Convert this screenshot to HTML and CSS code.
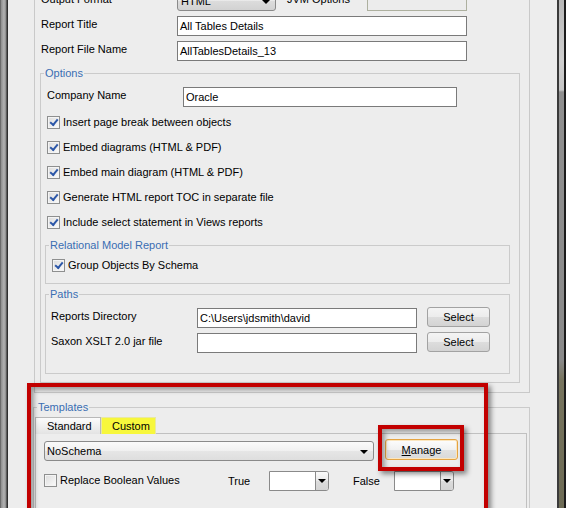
FILE: index.html
```html
<!DOCTYPE html>
<html lang="en">
<head>
    <meta charset="UTF-8">
    <title>Report Options</title>
    <link rel="stylesheet" href="styles.css">
</head>
<body>
<div class="window">
    <div class="edge-left"></div>

    <div class="dialog">
        <div class="general">
            <div class="row">
                <label class="lbl">Output Format</label>
                <div class="combo fmt"><span>HTML</span><i class="arrow"></i></div>
                <label class="lbl-jvm">JVM Options</label>
                <div class="field off"></div>
            </div>
            <div class="row">
                <label class="lbl">Report Title</label>
                <div class="field wide">All Tables Details</div>
            </div>
            <div class="row">
                <label class="lbl">Report File Name</label>
                <div class="field wide">AllTablesDetails_13</div>
            </div>

            <fieldset class="box options">
                <legend>Options</legend>
                <div class="row company">
                    <label class="lbl">Company Name</label>
                    <div class="field">Oracle</div>
                </div>
                <div class="check"><span class="tick on"></span>Insert page break between objects</div>
                <div class="check"><span class="tick on"></span>Embed diagrams (HTML &amp; PDF)</div>
                <div class="check"><span class="tick on"></span>Embed main diagram (HTML &amp; PDF)</div>
                <div class="check"><span class="tick on"></span>Generate HTML report TOC in separate file</div>
                <div class="check"><span class="tick on"></span>Include select statement in Views reports</div>

                <fieldset class="box inner relational">
                    <legend>Relational Model Report</legend>
                    <div class="check"><span class="tick on"></span>Group Objects By Schema</div>
                </fieldset>

                <fieldset class="box inner paths">
                    <legend>Paths</legend>
                    <div class="row path">
                        <label class="lbl">Reports Directory</label>
                        <div class="field">C:\Users\jdsmith\david</div>
                        <button class="btn">Select</button>
                    </div>
                    <div class="row path">
                        <label class="lbl">Saxon XSLT 2.0 jar file</label>
                        <div class="field"></div>
                        <button class="btn">Select</button>
                    </div>
                </fieldset>
            </fieldset>
        </div>

        <fieldset class="box templates">
            <legend>Templates</legend>
            <div class="tabs">
                <span class="tab">Standard</span>
                <span class="tab custom">Custom</span>
            </div>
            <div class="tab-panel">
                <div class="row">
                    <div class="combo schema"><span>NoSchema</span><i class="arrow"></i></div>
                    <button class="btn manage"><u>M</u>anage</button>
                </div>
                <div class="row bools">
                    <div class="check"><span class="tick"></span>Replace Boolean Values</div>
                    <label class="lbl-bool">True</label>
                    <div class="pick"><span class="pick-text"></span><span class="pick-btn"><i class="arrow"></i></span></div>
                    <label class="lbl-bool false">False</label>
                    <div class="pick"><span class="pick-text"></span><span class="pick-btn"><i class="arrow"></i></span></div>
                </div>
            </div>
        </fieldset>
    </div>

    <div class="edge-right"></div>

    <!-- red highlight frames drawn over the dialog -->
    <div class="callout big"></div>
    <div class="callout small"></div>
</div>
</body>
</html>
```

FILE: styles.css
```css
body {
    margin: 0;
    font-family: "Liberation Sans", Arial, sans-serif;
    font-size: 11px;
    color: #000;
}

.window {
    position: relative;
    width: 566px;
    height: 508px;
    overflow: hidden;
    display: flex;
    background: #ededed;
}

.edge-left {
    flex: none;
    width: 8px;
    background:
        linear-gradient(to right, #4a4a4a 0, #8d8d8d 1px, #b3b3b3 4px, #8a8a8a 6px, #2f2f2f 7px, #2f2f2f 8px);
}

.edge-right {
    flex: none;
    width: 9px;
    background:
        linear-gradient(to right, #3a3a3a 0, #3a3a3a 2px, transparent 2px, transparent 7px, #1c1c1c 7px),
        linear-gradient(#b8b8b8 0, #cfcfcf 60px, #c4c4c4 90px, #8f8f8f 92px, #8a8a8a 360px, #77745e 380px, #6d6b55 508px);
}

.dialog {
    flex: none;
    width: 549px;
}

.general {
    box-sizing: border-box;
    width: 496px;
    margin: -30px 0 0 26px;
    padding: 21px 0 0 6px;
    border: 1px solid #c9c9c9;
    border-top: none;
}

.row {
    display: flex;
    align-items: flex-start;
    height: 20px;
    margin-bottom: 5px;
}

.lbl {
    flex: none;
    width: 136px;
    padding-top: 2px;
    line-height: 13px;
}

.lbl-jvm {
    flex: none;
    width: 80px;
    margin-left: 11px;
    padding-top: 2px;
    line-height: 13px;
}

.field {
    box-sizing: border-box;
    flex: none;
    height: 20px;
    padding: 0 2px;
    border: 1px solid #7a7a7a;
    background: #fff;
    line-height: 18px;
    white-space: nowrap;
}

.field.wide {
    width: 290px;
}

.field.off {
    width: 100px;
    border-color: #adb09f;
    background: #ececec;
}

.combo {
    box-sizing: border-box;
    position: relative;
    flex: none;
    height: 20px;
    padding: 0 3px;
    border: 1px solid #8a8a8a;
    border-radius: 3px;
    background: linear-gradient(#f6f6f6, #e9e9e9 50%, #dcdcdc 51%, #d2d2d2);
    line-height: 18px;
}

.combo.fmt {
    width: 99px;
}

.arrow {
    position: absolute;
    right: 5px;
    top: 8px;
    width: 0;
    height: 0;
    border-left: 4px solid transparent;
    border-right: 4px solid transparent;
    border-top: 4px solid #000;
}

/* group boxes */
.box {
    margin: 0;
    padding: 0;
    border: 1px solid #cbcbcb;
}

.box legend {
    margin-left: 3px;
    padding: 0 1px;
    line-height: 12px;
    color: #3a6db3;
}

.options {
    margin: 6px 9px 9px -1px;
    padding: 8px 0 0;
}

.company {
    margin-left: 6px;
}

.company .field {
    width: 274px;
}

.check {
    display: flex;
    align-items: center;
    height: 13px;
    margin: 12px 0 0 6px;
    line-height: 13px;
    white-space: nowrap;
}

.company + .check {
    margin-top: 9px;
}

.tick {
    box-sizing: border-box;
    position: relative;
    flex: none;
    width: 13px;
    height: 13px;
    margin-right: 3px;
    border: 1px solid #8e8f8f;
    background: linear-gradient(135deg, #dcdcdc, #fbfbfb);
    box-shadow: inset 0 0 0 1px #f4f4f4;
}

.tick.on::after {
    content: "";
    position: absolute;
    left: 2px;
    top: 2px;
    width: 6px;
    height: 3px;
    border-left: 2px solid #2c57a8;
    border-bottom: 2px solid #2c57a8;
    transform: rotate(-50deg);
}

.inner {
    margin: 10px 9px 0 4px;
}

.relational {
    padding: 8px 0 11px;
}

.relational .check {
    margin-top: 0;
}

.paths {
    margin-top: 4px;
    margin-bottom: 8px;
    padding: 8px 0 15px;
}

.path {
    margin-left: 5px;
}

.path .lbl {
    width: 146px;
}

.path .field {
    width: 220px;
}

.btn {
    box-sizing: border-box;
    flex: none;
    width: 63px;
    height: 20px;
    margin: -1px 0 0 10px;
    padding: 0;
    border: 1px solid #a2a2a2;
    border-radius: 3px;
    background: linear-gradient(#f4f4f4, #ececec 50%, #dddddd 51%, #d3d3d3);
    font: inherit;
    color: #000;
}

/* templates */
.templates {
    box-sizing: border-box;
    width: 497px;
    margin: 8px 0 0 25px;
    padding: 4px 0 0;
}

.tabs {
    display: flex;
    height: 16px;
    margin-left: 1px;
}

.tab {
    box-sizing: border-box;
    width: 66px;
    height: 17px;
    padding-left: 11px;
    border: 1px solid #b8b8b8;
    border-bottom: none;
    background: linear-gradient(#fbfbfb, #e3e3e3);
    line-height: 16px;
}

.tab.custom {
    width: 55px;
    padding-left: 10px;
    border-color: #e9e9a0;
    background: #f7f73c;
}

.tab-panel {
    box-sizing: border-box;
    width: 492px;
    height: 120px;
    margin-left: 1px;
    padding: 7px 0 0 8px;
    border: 1px solid #c0c0c0;
}

.combo.schema {
    width: 330px;
    padding-left: 2px;
    background: linear-gradient(#fafafa, #f0f0f0 50%, #e6e6e6 51%, #dedede);
}

.btn.manage {
    width: 73px;
    height: 21px;
    margin: -2px 0 0 11px;
    border-color: #e5a443;
    background: linear-gradient(#fdfdfd, #f1f1f1 50%, #e2e2e2 51%, #d9d9d9);
    box-shadow: inset 0 0 0 1px #fbe6bf;
}

.bools {
    margin-top: 13px;
}

.bools .check {
    width: 184px;
    height: 13px;
    margin: 0;
}

.lbl-bool {
    flex: none;
    width: 41px;
    margin-top: 1px;
    line-height: 13px;
}

.lbl-bool.false {
    margin-left: 24px;
}

.pick {
    box-sizing: border-box;
    flex: none;
    display: flex;
    width: 60px;
    height: 20px;
    margin-top: -3px;
    border: 1px solid #8a8a8a;
    border-radius: 0 3px 3px 0;
    background: #fff;
}

.pick-text {
    flex: 1;
}

.pick-btn {
    position: relative;
    flex: none;
    width: 12px;
    border-left: 1px solid #8a8a8a;
    border-radius: 0 2px 2px 0;
    background: linear-gradient(#fafafa, #e9e9e9 50%, #dcdcdc 51%, #d4d4d4);
}

.pick .arrow {
    right: 2px;
    top: 7px;
}

/* red highlight frames */
.callout {
    position: absolute;
    box-sizing: border-box;
    border: 4px solid #c20000;
    box-shadow: 3px 3px 5px rgba(0, 0, 0, 0.45), inset 3px 3px 5px rgba(0, 0, 0, 0.35);
}

.callout.big {
    left: 27px;
    top: 383px;
    width: 461px;
    height: 150px;
}

.callout.small {
    left: 378px;
    top: 425px;
    width: 86px;
    height: 46px;
}
```
